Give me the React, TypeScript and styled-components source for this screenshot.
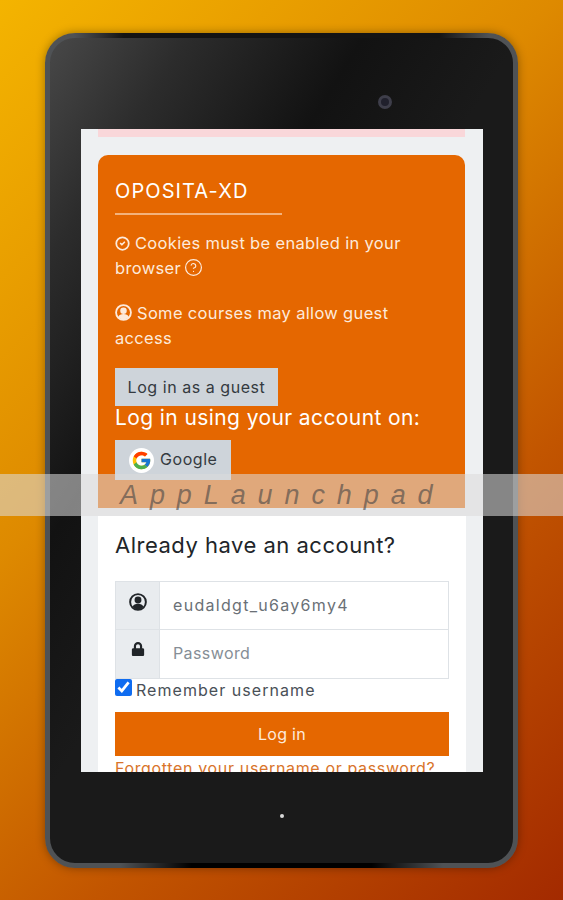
import styled, { createGlobalStyle } from "styled-components";
import { FaLock } from "react-icons/fa";
import { FcGoogle } from "react-icons/fc";
import { CircleCheck, CircleHelp } from "lucide-react";

const GlobalStyle = createGlobalStyle`
    html, body {
        margin: 0;
        padding: 0;
    }
    body {
        font-family: Inter, "Liberation Sans", sans-serif;
    }
`

const Page = styled.div`
    position: relative;
    width: 563px;
    height: 900px;
    overflow: hidden;
    padding: 33px 0 0 45px;
    box-sizing: border-box;
    background: linear-gradient(135deg, #f4b400 0%, #de8a00 38%, #c25500 68%, #a32a00 100%);
`

const Tablet = styled.div`
    position: relative;
    width: 473px;
    height: 835px;
    box-sizing: border-box;
    border-radius: 30px;
    border: 5px solid #4f5255;
    background: linear-gradient(122deg, #484848 0%, #2c2c2c 14%, #121212 32%, #1a1a1a 48%, #1a1a1a 100%);
    box-shadow: 0 0 10px rgba(0, 0, 0, 0.35);

    /* the rim goes dark along the middle of the top and bottom edges */
    &::before,
    &::after {
        content: "";
        position: absolute;
        height: 5px;
    }
    &::before {
        top: -5px;
        left: 24px;
        right: 24px;
        background: linear-gradient(90deg, transparent, #141414 12%, #141414 88%, transparent);
    }
    &::after {
        bottom: -5px;
        left: 70px;
        right: 70px;
        background: linear-gradient(90deg, transparent, #000 22%, #000 78%, transparent);
    }
`

const TopBezel = styled.div`
    height: 91px;
    box-sizing: border-box;
    padding: 57px 0 0 328px;
`

const Camera = styled.div`
    width: 14px;
    height: 14px;
    box-sizing: border-box;
    border-radius: 50%;
    background: #20202c;
    border: 3px solid #3e3e4a;
`

const Screen = styled.div`
    width: 402px;
    height: 643px;
    margin-left: 31px;
    box-sizing: border-box;
    padding: 0 18px 0 17px;
    overflow: hidden;
    background: #eef0f2;
`

const Alert = styled.div`
    height: 8px;
    background: #f9d7da;
    margin-bottom: 18px;
`

const OrangeCard = styled.div`
    height: 353px;
    box-sizing: border-box;
    padding: 22px 17px 0;
    border-radius: 10px 10px 0 0;
    background: #e56700;
    color: #fff;
`

const Title = styled.h2`
    margin: 0;
    font-size: 20px;
    line-height: 28px;
    font-weight: 400;
    letter-spacing: 1.1px;
`

const TitleRule = styled.div`
    width: 167px;
    height: 2px;
    margin: 8px 0 16px;
    background: #f3b27c;
`

const Note = styled.p`
    margin: 0 0 20px;
    font-size: 16.5px;
    line-height: 25px;
    letter-spacing: 0.33px;
    color: #fdeadb;

    svg {
        vertical-align: -2px;
    }
`

const QuestionIcon = styled(CircleHelp)`
    margin-left: 3px;
    vertical-align: -3px !important;
`

const GreyButton = styled.div`
    display: flex;
    align-items: center;
    box-sizing: border-box;
    background: #ced4da;
    color: #343a40;
    font-size: 16px;
    letter-spacing: 0.55px;
`

const GuestButton = styled(GreyButton)`
    width: 163px;
    height: 38px;
    justify-content: center;
    margin-top: -3px;
`

const ProviderTitle = styled.div`
    font-size: 21px;
    line-height: 24px;
    margin: 0 0 10px;
    letter-spacing: 0.4px;
    color: #fff;
`

const GoogleButton = styled(GreyButton)`
    width: 116px;
    height: 40px;
    gap: 6px;
    padding: 0 0 2px 14px;
`

const GoogleBadge = styled.span`
    display: flex;
    align-items: center;
    justify-content: center;
    width: 25px;
    height: 25px;
    margin-top: 2px;
    border-radius: 50%;
    background: #fff;
`

const LoginCard = styled.div`
    margin: 8px -1px 0 0;
    padding: 14px 17px 0;
    background: #fff;
    height: 260px;
    box-sizing: border-box;
`

const LoginHeading = styled.h3`
    margin: 0 0 21px;
    font-size: 22px;
    line-height: 30px;
    font-weight: 400;
    letter-spacing: 0.5px;
    color: #212529;
`

const InputGroup = styled.div`
    width: 334px;
    box-sizing: border-box;
    border: 1px solid #dee2e6;
`

const InputRow = styled.div<{ $last?: boolean }>`
    display: flex;
    height: ${({ $last }) => ($last ? "48px" : "47px")};
    border-bottom: ${({ $last }) => ($last ? "none" : "1px solid #dee2e6")};
`

const Addon = styled.div`
    width: 44px;
    flex: none;
    display: flex;
    justify-content: center;
    padding-top: 11px;
    box-sizing: border-box;
    background: #e9ecef;
    border-right: 1px solid #dee2e6;
    color: #212529;
`

const LockIcon = styled(FaLock)`
    margin-top: 1px;
`

const Field = styled.div<{ $placeholder?: boolean }>`
    display: flex;
    align-items: center;
    padding: 0 0 2px 13px;
    font-size: 16px;
    letter-spacing: ${({ $placeholder }) => ($placeholder ? "0.4px" : "1.3px")};
    color: ${({ $placeholder }) => ($placeholder ? "#868e96" : "#6a7076")};
`

const RememberRow = styled.label`
    display: flex;
    align-items: flex-start;
    gap: 4px;
    height: 24px;
    margin-bottom: 9px;
    font-size: 16px;
    line-height: 22px;
    letter-spacing: 1.05px;
    color: #495057;
`

const CheckBox = styled.input`
    width: 17px;
    height: 17px;
    margin: 0;
    accent-color: #0f6cf0;
`

const SubmitButton = styled.div`
    width: 334px;
    height: 44px;
    display: flex;
    align-items: center;
    justify-content: center;
    background: #e56700;
    color: #fdeadb;
    font-size: 16px;
    letter-spacing: 0.3px;
`

const ForgotLink = styled.div`
    margin-top: 1px;
    font-size: 16px;
    line-height: 22px;
    letter-spacing: 0.65px;
    white-space: nowrap;
    color: #d9742a;
`

const BottomBezel = styled.div`
    display: flex;
    justify-content: center;
    padding-top: 42px;
`

const Dot = styled.div`
    width: 4px;
    height: 4px;
    border-radius: 50%;
    background: #d8d8d8;
`

// translucent strip that lies over the whole picture
const WatermarkBand = styled.div`
    position: absolute;
    left: 0;
    right: 0;
    top: 474px;
    height: 42px;
    display: flex;
    align-items: center;
    padding-left: 120px;
    box-sizing: border-box;
    background: rgba(220, 220, 220, 0.56);
    font-family: "Liberation Sans", sans-serif;
    font-style: italic;
    font-size: 27px;
    letter-spacing: 11.9px;
    color: rgba(70, 70, 70, 0.62);
`

// ring with a filled head and shoulders
const UserRing = ({ size }: { size: number }) => (
    <svg width={size} height={size} viewBox="0 0 24 24" fill="currentColor">
        <circle cx="12" cy="12" r="10.5" fill="none" stroke="currentColor" strokeWidth="2.6" />
        <circle cx="12" cy="9.4" r="4.6" />
        <path d="M4.6 18.4c1.2-3 3.8-4.2 7.4-4.2s6.2 1.2 7.4 4.2c-1.8 2.2-4.4 3.4-7.4 3.4s-5.6-1.2-7.4-3.4z" />
    </svg>
);

const App = () => {
    return (
        <Page>
            <GlobalStyle />
            <Tablet>
                <TopBezel>
                    <Camera />
                </TopBezel>
                <Screen>
                    <Alert />
                    <OrangeCard>
                        <Title>OPOSITA-XD</Title>
                        <TitleRule />
                        <Note>
                            <CircleCheck size={15} strokeWidth={2.8} /> Cookies must be enabled in your browser
                            <QuestionIcon size={19} strokeWidth={1.5} />
                        </Note>
                        <Note>
                            <UserRing size={17} /> Some courses may allow guest access
                        </Note>
                        <GuestButton>Log in as a guest</GuestButton>
                        <ProviderTitle>Log in using your account on:</ProviderTitle>
                        <GoogleButton>
                            <GoogleBadge>
                                <FcGoogle size={21} />
                            </GoogleBadge>
                            Google
                        </GoogleButton>
                    </OrangeCard>
                    <LoginCard>
                        <LoginHeading>Already have an account?</LoginHeading>
                        <InputGroup>
                            <InputRow>
                                <Addon>
                                    <UserRing size={18} />
                                </Addon>
                                <Field>eudaldgt_u6ay6my4</Field>
                            </InputRow>
                            <InputRow $last>
                                <Addon>
                                    <LockIcon size={14} />
                                </Addon>
                                <Field $placeholder>Password</Field>
                            </InputRow>
                        </InputGroup>
                        <RememberRow>
                            <CheckBox type="checkbox" defaultChecked />
                            Remember username
                        </RememberRow>
                        <SubmitButton>Log in</SubmitButton>
                        <ForgotLink>Forgotten your username or password?</ForgotLink>
                    </LoginCard>
                </Screen>
                <BottomBezel>
                    <Dot />
                </BottomBezel>
            </Tablet>
            <WatermarkBand>AppLaunchpad</WatermarkBand>
        </Page>
    );
};

export default App;
